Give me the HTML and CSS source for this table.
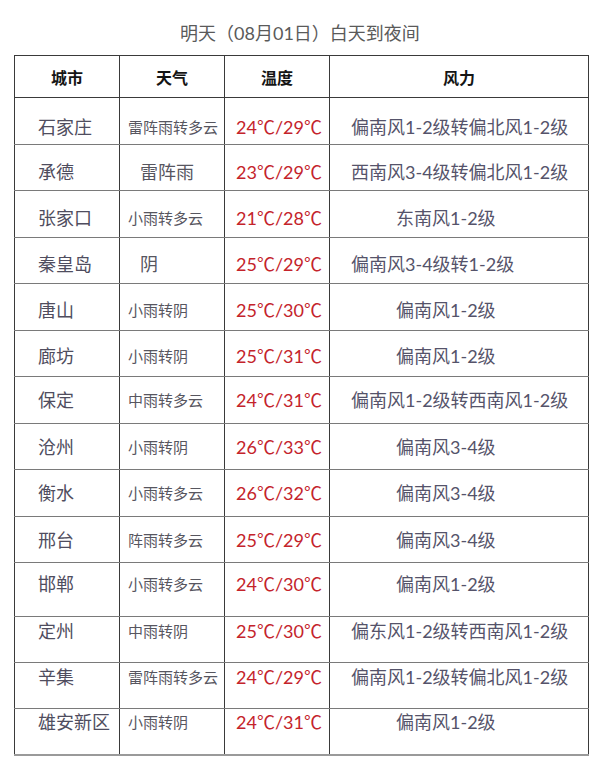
FILE: index.html
```html
<!DOCTYPE html>
<html lang="zh-CN">
<head>
<meta charset="utf-8">
<title>明天（08月01日）白天到夜间</title>
<link rel="stylesheet" href="styles.css">
</head>
<body>
<div class="page">
  <div class="title">明天（08月01日）白天到夜间</div>
  <table class="forecast">
    <colgroup>
      <col class="c-city"><col class="c-weather"><col class="c-temp"><col class="c-wind">
    </colgroup>
    <thead>
      <tr class="head">
        <th>城市</th><th>天气</th><th>温度</th><th>风力</th>
      </tr>
    </thead>
    <tbody>
      <tr class="p19"><td class="city">石家庄</td><td class="wx">雷阵雨转多云</td><td class="temp">24℃/29℃</td><td class="wind long">偏南风1-2级转偏北风1-2级</td></tr>
      <tr class="p18"><td class="city">承德</td><td class="wx big">雷阵雨</td><td class="temp">23℃/29℃</td><td class="wind long">西南风3-4级转偏北风1-2级</td></tr>
      <tr class="p17"><td class="city">张家口</td><td class="wx">小雨转多云</td><td class="temp">21℃/28℃</td><td class="wind short">东南风1-2级</td></tr>
      <tr class="p16"><td class="city">秦皇岛</td><td class="wx big">阴</td><td class="temp">25℃/29℃</td><td class="wind long">偏南风3-4级转1-2级</td></tr>
      <tr class="p16"><td class="city">唐山</td><td class="wx">小雨转阴</td><td class="temp">25℃/30℃</td><td class="wind short">偏南风1-2级</td></tr>
      <tr class="p15"><td class="city">廊坊</td><td class="wx">小雨转阴</td><td class="temp">25℃/31℃</td><td class="wind short">偏南风1-2级</td></tr>
      <tr class="p13"><td class="city">保定</td><td class="wx">中雨转多云</td><td class="temp">24℃/31℃</td><td class="wind long">偏南风1-2级转西南风1-2级</td></tr>
      <tr class="p13"><td class="city">沧州</td><td class="wx">小雨转阴</td><td class="temp">26℃/33℃</td><td class="wind short">偏南风3-4级</td></tr>
      <tr class="p13"><td class="city">衡水</td><td class="wx">小雨转多云</td><td class="temp">26℃/32℃</td><td class="wind short">偏南风3-4级</td></tr>
      <tr class="p13"><td class="city">邢台</td><td class="wx">阵雨转多云</td><td class="temp">25℃/29℃</td><td class="wind short">偏南风3-4级</td></tr>
      <tr class="p11 tall"><td class="city">邯郸</td><td class="wx">小雨转多云</td><td class="temp">24℃/30℃</td><td class="wind short">偏南风1-2级</td></tr>
      <tr class="p4 low"><td class="city">定州</td><td class="wx">中雨转阴</td><td class="temp">25℃/30℃</td><td class="wind long">偏东风1-2级转西南风1-2级</td></tr>
      <tr class="p4 low"><td class="city">辛集</td><td class="wx">雷阵雨转多云</td><td class="temp">24℃/29℃</td><td class="wind long">偏南风1-2级转偏北风1-2级</td></tr>
      <tr class="p3 low last"><td class="city">雄安新区</td><td class="wx">小雨转阴</td><td class="temp">24℃/31℃</td><td class="wind short">偏南风1-2级</td></tr>
    </tbody>
  </table>
</div>
</body>
</html>
```

FILE: styles.css
```css
html, body {
  margin: 0;
  padding: 0;
  background: #ffffff;
}

.page {
  width: 600px;
  font-family: "Lato", "Noto Sans CJK SC", sans-serif;
  color: #4f4d5e;
}

.title {
  padding-top: 21px;
  padding-bottom: 10px;
  line-height: 24px;
  font-size: 18px;
  text-align: center;
  color: #5a5a5a;
}

.forecast {
  margin-left: 14px;
  border-collapse: collapse;
  table-layout: fixed;
  width: 574px;
}

.c-city { width: 105px; }
.c-weather { width: 105px; }
.c-temp { width: 105px; }
.c-wind { width: 259px; }

.forecast th,
.forecast td {
  border-left: 1px solid #3a3a3a;
  border-right: 1px solid #3a3a3a;
  border-top: 1px solid #7a7a7a;
  border-bottom: 1px solid #7a7a7a;
  white-space: nowrap;
  padding: 0;
}

.head { height: 42px; }

.forecast th {
  border-top: 1px solid #3a3a3a;
  border-bottom: 1px solid #3a3a3a;
  font-family: "Noto Sans CJK SC", sans-serif;
  font-weight: 700;
  font-size: 16px;
  color: #151515;
  text-align: center;
  vertical-align: middle;
  line-height: 20px;
}

.forecast tbody tr { height: 46.5px; }
.forecast tbody tr.tall { height: 54px; }
.forecast tbody tr.low { height: 46.2px; }
.forecast tbody tr.last td { border-bottom: 2px solid #9a9a9a; }

.forecast td {
  vertical-align: top;
  line-height: 20px;
  font-size: 18px;
  text-align: left;
}

.p19 td { padding-top: 18.5px; }
.p18 td { padding-top: 17.5px; }
.p17 td { padding-top: 16.5px; }
.p16 td { padding-top: 16px; }
.p15 td { padding-top: 15px; }
.p13 td { padding-top: 13px; }
.p11 td { padding-top: 11px; }
.p4 td { padding-top: 4px; }
.p3 td { padding-top: 3px; }

.forecast td.city {
  padding-left: 23px;
  color: #4f4d5e;
}

.forecast td.wx {
  padding-left: 8px;
  font-size: 15px;
  color: #57565f;
}

.forecast td.wx.big {
  padding-left: 20px;
  font-size: 18px;
}

.forecast td.temp {
  padding-left: 11px;
  color: #c4232b;
}

.forecast td.wind {
  color: #55536a;
}

.forecast td.wind.long { padding-left: 21px; }
.forecast td.wind.short { padding-left: 66px; }
```
